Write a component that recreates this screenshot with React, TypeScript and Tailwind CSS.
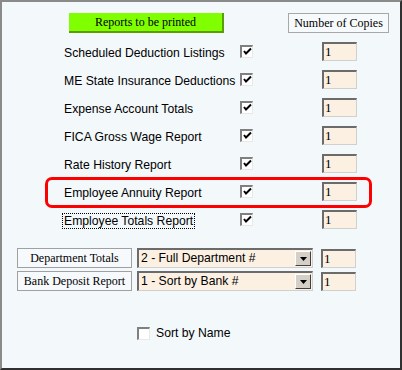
import React from "react";

const serif = { fontFamily: '"Liberation Serif", "Times New Roman", serif' };
const sans = { fontFamily: '"Liberation Sans", Arial, sans-serif' };

const reports = [
  "Scheduled Deduction Listings",
  "ME State Insurance Deductions",
  "Expense Account Totals",
  "FICA Gross Wage Report",
  "Rate History Report",
  "Employee Annuity Report",
  "Employee Totals Report",
];

const CheckBox = ({ checked }: { checked: boolean }) => (
  <div className="w-[13px] h-[13px] shrink-0 border-t-2 border-l-2 border-b border-r border-t-[#808080] border-l-[#808080] border-b-[#e8e8e8] border-r-[#e8e8e8] bg-white flex items-center justify-center">
    {checked && (
      <svg width="9" height="9" viewBox="0 0 9 9">
        <path d="M1 4 L3 6.5 L8 1.5" stroke="#000" strokeWidth="2" fill="none" />
      </svg>
    )}
  </div>
);

const CopiesBox = () => (
  <div
    className="w-[35px] h-[19px] bg-[#fcf0e2] border-t-2 border-l-2 border-b border-r border-t-[#6b6b6b] border-l-[#6b6b6b] border-b-[#d0d0d0] border-r-[#d0d0d0] pl-[1px] text-[13px] leading-[16px] text-black"
    style={serif}
  >
    1
  </div>
);

const LabelBox = ({ text }: { text: string }) => (
  <div
    className="w-[115px] h-[20px] border border-[#a0a0a0] bg-[#f7fafc] flex items-center justify-center text-[12px] text-black"
    style={serif}
  >
    {text}
  </div>
);

const Select = ({ text }: { text: string }) => (
  <div className="w-[176px] h-[20px] bg-[#fcf0e2] border-t-2 border-l-2 border-b border-r border-t-[#6b6b6b] border-l-[#6b6b6b] border-b-[#d0d0d0] border-r-[#d0d0d0] flex items-center justify-between">
    <span className="pl-[2px] text-[12.2px] text-black whitespace-nowrap" style={sans}>
      {text}
    </span>
    <div className="w-[16px] h-[15px] mr-[1px] bg-[#d4d0c8] border border-t-white border-l-white border-b-[#404040] border-r-[#404040] flex items-center justify-center">
      <svg width="7" height="4" viewBox="0 0 7 4">
        <path d="M0 0 H7 L3.5 4 Z" fill="#000" />
      </svg>
    </div>
  </div>
);

export default function App() {
  return (
    <div className="relative w-[402px] h-[370px] bg-[#f3f8fb] border-t-2 border-l-2 border-r-2 border-b-2 border-t-[#8a8a8a] border-l-[#8a8a8a] border-r-[#303030] border-b-[#303030]">
      <div className="flex pt-[11px]">
        <div
          className="ml-[67px] w-[155px] h-[20px] bg-[#80ff00] border-b-2 border-r-2 border-b-[#5a9e00] border-r-[#5a9e00] flex items-center justify-center text-[12px] text-black"
          style={serif}
        >
          Reports to be printed
        </div>
        <div
          className="ml-[64px] w-[101px] h-[20px] border border-[#a8a8a8] bg-[#f7fafc] flex items-center justify-center text-[12px] text-black"
          style={serif}
        >
          Number of Copies
        </div>
      </div>

      <div className="flex flex-col mt-[4px]">
        {reports.map((r, i) => (
          <div key={r} className="flex items-center h-[28px]">
            <div className="ml-[61px] w-[177px] shrink-0 whitespace-nowrap">
              <span
                className={
                  "text-[12.2px] text-black px-[1px] " +
                  (i === 6 ? "outline outline-1 outline-dotted outline-black" : "")
                }
                style={sans}
              >
                {r}
              </span>
            </div>
            <CheckBox checked />
            <div className="ml-[69px]">
              <CopiesBox />
            </div>
          </div>
        ))}
      </div>

      <div className="flex flex-col gap-[3px] mt-[15px] ml-[15px]">
        <div className="flex items-center gap-[5px]">
          <LabelBox text="Department Totals" />
          <Select text="2 - Full Department #" />
          <div className="ml-[3px]">
            <CopiesBox />
          </div>
        </div>
        <div className="flex items-center gap-[5px]">
          <LabelBox text="Bank Deposit Report" />
          <Select text="1 - Sort by Bank #" />
          <div className="ml-[3px]">
            <CopiesBox />
          </div>
        </div>
      </div>

      <div className="flex items-center ml-[135px] mt-[33px] gap-[6px]">
        <CheckBox checked={false} />
        <span className="text-[12.2px] text-black" style={sans}>
          Sort by Name
        </span>
      </div>

      <div className="absolute left-[43px] top-[175px] w-[327px] h-[31px] border-[3px] border-[#ff0000] rounded-[7px] pointer-events-none" />
    </div>
  );
}
